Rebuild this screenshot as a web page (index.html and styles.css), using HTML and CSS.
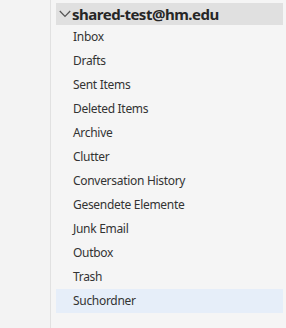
FILE: index.html
```html
<!DOCTYPE html>
<html lang="en">
  <head>
    <meta charset="UTF-8" />
    <title>Folders</title>
    <link rel="stylesheet" href="styles.css">
  </head>
  <body>
    <div class="app">
      <div class="rail"></div>
      <nav class="pane">
        <div class="account">
          <svg class="chevron" width="12" height="8" viewBox="0 0 12 8">
            <path d="M0.8 1 L6 6.4 L11.2 1" fill="none" stroke="#555" stroke-width="1.3" />
          </svg>
          <span>shared-test@hm.edu</span>
        </div>
        <ul class="folders">
          <li>Inbox</li>
          <li>Drafts</li>
          <li>Sent Items</li>
          <li>Deleted Items</li>
          <li>Archive</li>
          <li>Clutter</li>
          <li>Conversation History</li>
          <li>Gesendete Elemente</li>
          <li>Junk Email</li>
          <li>Outbox</li>
          <li>Trash</li>
          <li class="selected">Suchordner</li>
        </ul>
      </nav>
    </div>
  </body>
</html>
```

FILE: styles.css
```css
* {
  margin: 0;
  padding: 0;
  box-sizing: border-box;
}
html,
body {
  height: 100%;
}
body {
  font-family: "Noto Sans", "Open Sans", sans-serif;
  background-color: #f5f5f5;
}
.app {
  display: flex;
  height: 100%;
}
.rail {
  width: 51px;
  background-color: #f3f3f3;
  border-right: 1px solid #e1e1e1;
}
.pane {
  flex: 1;
  padding: 3px 3px 0 5px;
}
.account {
  display: flex;
  align-items: center;
  height: 22px;
  padding-left: 3px;
  background-color: #e0e0e0;
  font-size: 15px;
  font-weight: 700;
  letter-spacing: -0.5px;
  color: #262626;
}
.chevron {
  margin-right: 1px;
}
.folders {
  list-style: none;
}
.folders li {
  height: 24px;
  line-height: 24px;
  padding-left: 17px;
  font-size: 12px;
  letter-spacing: -0.3px;
  color: #333;
}
.folders .selected {
  background-color: #e6eef9;
}
```
